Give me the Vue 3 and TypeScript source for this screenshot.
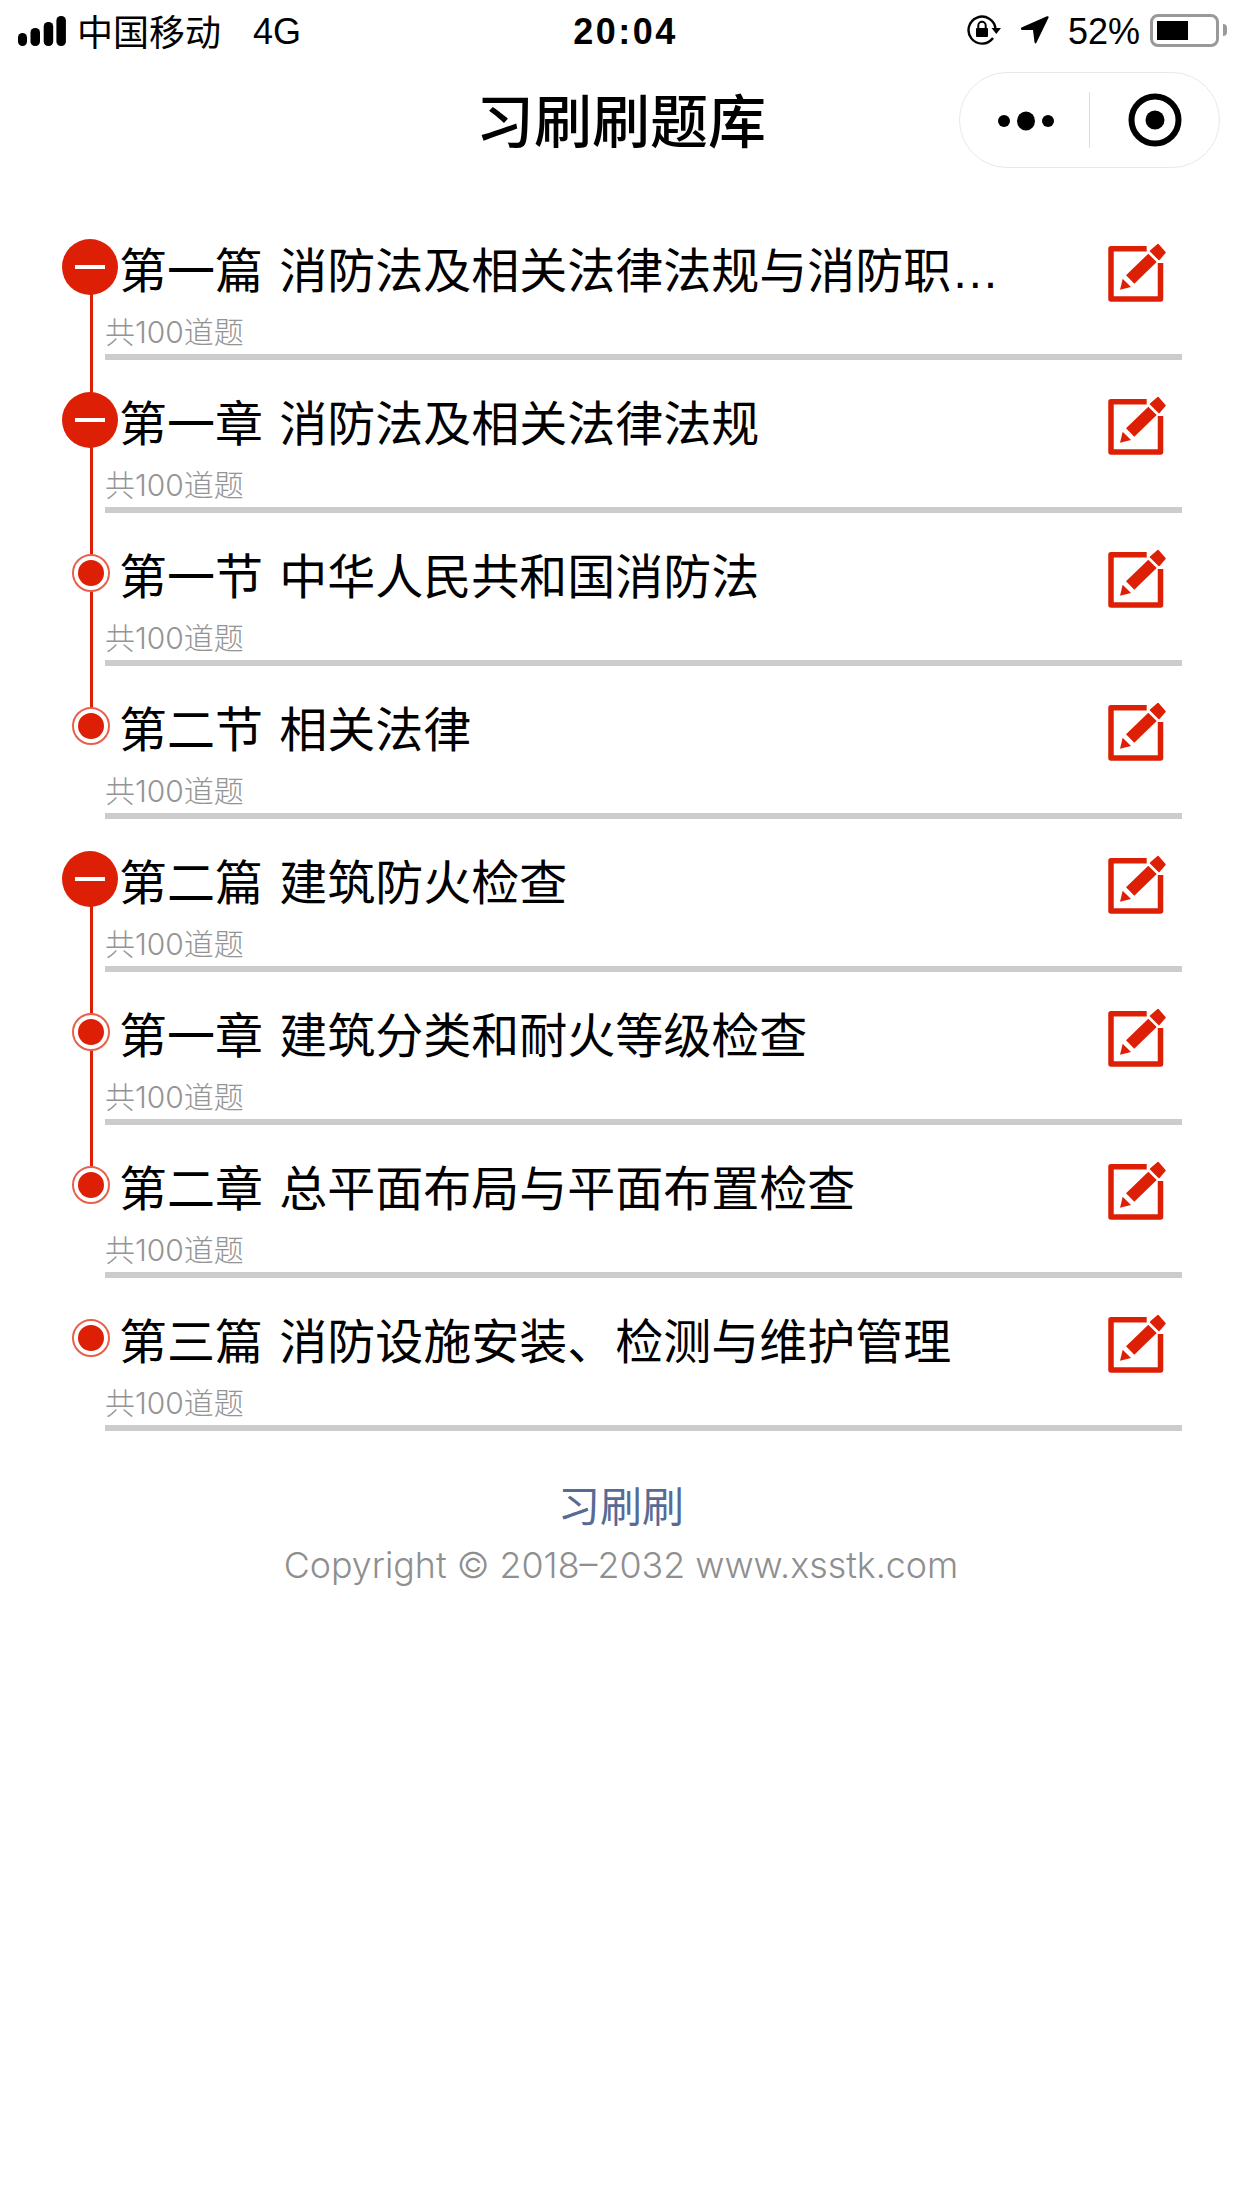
<script setup lang="ts">
interface Chapter {
  title: string
  kind: 'open' | 'leaf'
  line: boolean
}

const chapters: Chapter[] = [
  { title: '第一篇 消防法及相关法律法规与消防职业道德', kind: 'open', line: true },
  { title: '第一章 消防法及相关法律法规', kind: 'open', line: true },
  { title: '第一节 中华人民共和国消防法', kind: 'leaf', line: true },
  { title: '第二节 相关法律', kind: 'leaf', line: false },
  { title: '第二篇 建筑防火检查', kind: 'open', line: true },
  { title: '第一章 建筑分类和耐火等级检查', kind: 'leaf', line: true },
  { title: '第二章 总平面布局与平面布置检查', kind: 'leaf', line: false },
  { title: '第三篇 消防设施安装、检测与维护管理', kind: 'leaf', line: false },
]
</script>

<template>
  <div class="page">
    <header class="status">
      <div class="status-left">
        <svg class="signal" width="48" height="30" viewBox="0 0 48 30">
          <rect x="0" y="17" width="9" height="13" rx="4.500" />
          <rect x="12.500" y="12" width="9.500" height="18" rx="4.500" />
          <rect x="25.700" y="6" width="9.500" height="24" rx="4.500" />
          <rect x="38.400" y="0" width="9.500" height="30" rx="4.500" />
        </svg>
        <span class="carrier">中国移动</span>
        <span class="net latin">4G</span>
      </div>
      <div class="time latin">20:04</div>
      <div class="status-right">
        <svg class="lock" width="34" height="32" viewBox="0 0 34 32">
          <path d="M26 24A13.500 13.500 0 1 1 28.500 15" fill="none" stroke="#000" stroke-width="2.400" />
          <path d="M24.500 14h9.500l-4.700 6z" />
          <rect x="9" y="14" width="12" height="9" rx="1" />
          <path d="M11.300 14V11.500a3.700 3.700 0 0 1 7.400 0V14" fill="none" stroke="#000" stroke-width="2" />
        </svg>
        <svg class="arrow" width="28" height="28" viewBox="0 0 28 28">
          <path d="M0.500 11.500 26 0.300c1.200-0.500 2 0.300 1.500 1.500L15.500 26.500c-0.600 1.200-1.800 1.200-2-0.200L12 14 1 14c-1.200 0-1.500-2-0.500-2.500z" />
        </svg>
        <span class="pct latin">52%</span>
        <div class="battery"><div class="battery-fill" /></div>
        <div class="battery-cap" />
      </div>
    </header>

    <nav class="nav">
      <h1 class="nav-title">习刷刷题库</h1>
      <div class="capsule">
        <div class="capsule-btn">
          <svg class="dots" width="56" height="20" viewBox="0 0 56 20">
            <circle cx="6" cy="10" r="6" />
            <ellipse cx="28" cy="10" rx="9" ry="9.500" />
            <circle cx="50" cy="10" r="6" />
          </svg>
        </div>
        <div class="capsule-sep" />
        <div class="capsule-btn">
          <svg width="54" height="54" viewBox="0 0 54 54">
            <circle cx="27" cy="27" r="23.500" fill="none" stroke="#000" stroke-width="6" />
            <circle cx="27" cy="27" r="9.500" />
          </svg>
        </div>
      </div>
    </nav>

    <main class="list">
      <section v-for="(item, i) in chapters" :key="i" class="row">
        <div v-if="item.line" class="line" />
        <div class="node" :class="item.kind" />
        <div class="text">
          <div class="title">{{ item.title }}</div>
          <div class="sub">共100道题</div>
        </div>
        <svg class="edit" width="60" height="62" viewBox="0 0 60 62">
          <path d="M39.700 5.800H4V56H53.500V20" fill="none" stroke="#dd2005" stroke-width="5.500" stroke-linejoin="round" />
          <path d="M13 46.700 15.700 35.700 24 44z" fill="#dd2005" />
          <path d="M19 32.300 27.300 40.700 49.700 19 41.300 10.700z" fill="#dd2005" />
          <path d="M43.500 8 52 16.500 58 9.500 51 1.500z" fill="#dd2005" stroke="#dd2005" stroke-width="1.500" stroke-linejoin="round" />
        </svg>
      </section>
    </main>

    <footer class="footer">
      <div class="brand">习刷刷</div>
      <div class="copy">Copyright © 2018–2032 www.xsstk.com</div>
    </footer>
  </div>
</template>

<style>
body {
  background: #fff;
}
</style>

<style scoped>
.page {
  width: 1242px;
  height: 2208px;
  overflow: hidden;
  background: #fff;
  color: #000;
  font-family: "Liberation Sans", "Noto Sans CJK SC", sans-serif;
}

/* status bar */
.status {
  display: grid;
  grid-template-columns: 1fr auto 1fr;
  align-items: center;
  height: 60px;
  padding: 0 15px 0 18px;
  font-size: 36px;
}
.status-left,
.status-right {
  display: flex;
  align-items: center;
}
.status-right {
  justify-content: flex-end;
}
.signal {
  position: relative;
  top: 1px;
}
.latin {
  position: relative;
  top: 2px;
}
.carrier {
  margin-left: 11px;
  width: 144px;
  white-space: nowrap;
}
.net {
  margin-left: 32px;
}
.time {
  margin-left: 6px;
  font-weight: 700;
  letter-spacing: 2.500px;
}
.arrow {
  margin-left: 20px;
}
.pct {
  margin-left: 19px;
}
.battery {
  margin-left: 10px;
  width: 69px;
  height: 33px;
  box-sizing: border-box;
  padding: 4px;
  border: 3px solid #999;
  border-radius: 8px;
}
.battery-fill {
  width: 31px;
  height: 100%;
  background: #000;
}
.battery-cap {
  margin-left: 4px;
  width: 4px;
  height: 12px;
  border-radius: 0 4px 4px 0;
  background: #999;
}

/* nav bar */
.nav {
  position: relative;
  display: flex;
  justify-content: center;
  align-items: center;
  height: 124px;
}
.nav-title {
  margin: 2px 0 0;
  font-size: 58px;
  font-weight: 500;
  line-height: 1;
}
.capsule {
  position: absolute;
  top: 12px;
  right: 22px;
  display: flex;
  align-items: center;
  width: 261px;
  height: 96px;
  box-sizing: border-box;
  border: 1px solid #e8e8e8;
  border-radius: 48px;
}
.capsule-btn {
  flex: 1;
  display: flex;
  justify-content: center;
  align-items: center;
}
.dots {
  margin: 2px 0 0 3px;
}
.capsule-sep {
  width: 1px;
  height: 56px;
  background: #dcdcdc;
}

/* chapter list */
.list {
  display: flex;
  flex-direction: column;
  padding-top: 23px;
}
.row {
  position: relative;
  display: flex;
  align-items: flex-start;
  box-sizing: border-box;
  height: 153px;
  margin: 0 60px 0 105px;
  border-bottom: 6px solid #ccc;
}
.line {
  position: absolute;
  left: -15px;
  top: 60px;
  width: 3px;
  height: 153px;
  background: #dd2005;
}
.node {
  position: absolute;
  z-index: 1;
  border-radius: 50%;
}
.node.open {
  left: -43px;
  top: 32px;
  width: 56px;
  height: 56px;
  background: #dd2005;
}
.node.open::before {
  content: "";
  position: absolute;
  left: 13px;
  top: 26px;
  width: 30px;
  height: 4px;
  background: #fff;
}
.node.leaf {
  left: -33px;
  top: 41px;
  width: 38px;
  height: 38px;
  box-sizing: border-box;
  border: 2px solid #e8604c;
  background: #fff;
}
.node.leaf::before {
  content: "";
  position: absolute;
  left: 4px;
  top: 4px;
  width: 26px;
  height: 26px;
  border-radius: 50%;
  background: #dd2005;
}
.text {
  flex: 1;
  min-width: 0;
}
.title {
  margin-top: 35px;
  padding: 0 80px 0 14px;
  font-size: 48px;
  line-height: 60px;
  word-spacing: 3px;
  white-space: nowrap;
  overflow: hidden;
  text-overflow: ellipsis;
}
.sub {
  margin-top: 10px;
  font-family: Inter, "Noto Sans CJK SC", sans-serif;
  font-size: 30px;
  font-weight: 300;
  line-height: 40px;
  color: #949494;
}
.edit {
  flex: none;
  margin: 36px 15px 0 0;
}

/* footer */
.footer {
  display: flex;
  flex-direction: column;
  align-items: center;
  padding-top: 51px;
}
.brand {
  font-size: 42px;
  line-height: 52px;
  color: #576b95;
}
.copy {
  margin-top: 9px;
  font-family: Inter, "Noto Sans CJK SC", sans-serif;
  font-size: 35.800px;
  font-weight: 300;
  line-height: 44px;
  color: #8f8f8f;
}
</style>
